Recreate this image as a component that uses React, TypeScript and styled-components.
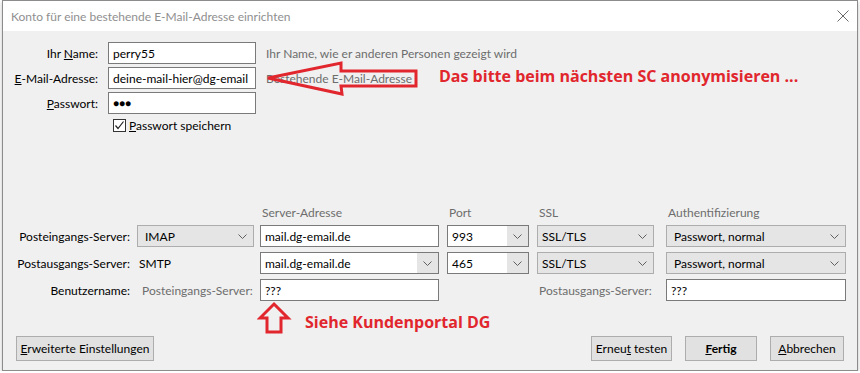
import styled, { createGlobalStyle } from "styled-components";

const GlobalStyle = createGlobalStyle`
    body {
        margin: 0;
        background: #ffffff;
        font-family: "Segoe UI", Lato, "Open Sans", sans-serif;
        font-size: 12px;
        color: #000000;
    }
`;

const UI_FONT = `"Segoe UI", Lato, "Open Sans", sans-serif`;
const RED = "#e1262d";

function Chevron() {
    return (
        <svg width="9" height="5" viewBox="0 0 9 5">
            <path d="M0.5 0.5 L4.5 4.5 L8.5 0.5" fill="none" stroke="#606060" strokeWidth="1" />
        </svg>
    );
}

export default function App() {
    return (
        <>
            <GlobalStyle />
            <Dialog>
                <TitleBar>
                    <Title>Konto für eine bestehende E-Mail-Adresse einrichten</Title>
                    <svg width="12" height="12" viewBox="0 0 12 12">
                        <path d="M0.5 0.5 L11.5 11.5 M11.5 0.5 L0.5 11.5" stroke="#6a6a6a" strokeWidth="1" />
                    </svg>
                </TitleBar>
                <Content>
                    <TopForm>
                        <Label>Ihr <u>N</u>ame:</Label>
                        <TextInput $width={148}>perry55</TextInput>
                        <Hint>Ihr Name, wie er anderen Personen gezeigt wird</Hint>

                        <Label><u>E</u>-Mail-Adresse:</Label>
                        <TextInput $width={148}>deine-mail-hier@dg-email</TextInput>
                        <Hint>Bestehende E-Mail-Adresse</Hint>

                        <Label><u>P</u>asswort:</Label>
                        <TextInput $width={148}>
                            <Dots>●●●</Dots>
                        </TextInput>
                        <span />

                        <span />
                        <CheckRow>
                            <CheckBox>
                                <svg width="11" height="11" viewBox="0 0 11 11">
                                    <path d="M1.5 5.5 L4 8.5 L9.5 1.5" fill="none" stroke="#222" strokeWidth="1.2" />
                                </svg>
                            </CheckBox>
                            <span><u>P</u>asswort speichern</span>
                        </CheckRow>
                        <span />
                    </TopForm>

                    <ServerGrid>
                        <span />
                        <span />
                        <ColHead>Server-Adresse</ColHead>
                        <ColHead>Port</ColHead>
                        <ColHead>SSL</ColHead>
                        <ColHead>Authentifizierung</ColHead>

                        <RowLabel>Posteingangs-Server:</RowLabel>
                        <Select $width={117} $pad={7}>
                            <span>IMAP</span>
                            <Chevron />
                        </Select>
                        <TextInput $width={179}>mail.dg-email.de</TextInput>
                        <Combo $width={82}>
                            <ComboText>993</ComboText>
                            <ComboButton><Chevron /></ComboButton>
                        </Combo>
                        <Select $width={117} $pad={4}>
                            <span>SSL/TLS</span>
                            <Chevron />
                        </Select>
                        <Select $width={180} $pad={7}>
                            <span>Passwort, normal</span>
                            <Chevron />
                        </Select>

                        <RowLabel>Postausgangs-Server:</RowLabel>
                        <PlainValue>SMTP</PlainValue>
                        <Combo $width={179}>
                            <ComboText>mail.dg-email.de</ComboText>
                            <ComboButton><Chevron /></ComboButton>
                        </Combo>
                        <Combo $width={82}>
                            <ComboText>465</ComboText>
                            <ComboButton><Chevron /></ComboButton>
                        </Combo>
                        <Select $width={117} $pad={4}>
                            <span>SSL/TLS</span>
                            <Chevron />
                        </Select>
                        <Select $width={180} $pad={7}>
                            <span>Passwort, normal</span>
                            <Chevron />
                        </Select>

                        <RowLabel>Benutzername:</RowLabel>
                        <SubLabel>Posteingangs-Server:</SubLabel>
                        <TextInput $width={179}>???</TextInput>
                        <span />
                        <SubLabel $flush>Postausgangs-Server:</SubLabel>
                        <TextInput $width={180}>???</TextInput>
                    </ServerGrid>

                    <ButtonRow>
                        <Button $width={138}><u>E</u>rweiterte Einstellungen</Button>
                        <RightButtons>
                            <Button $width={81}>Erneu<u>t</u> testen</Button>
                            <Button $width={72} $bold><u>F</u>ertig</Button>
                            <Button $width={74}><u>A</u>bbrechen</Button>
                        </RightButtons>
                    </ButtonRow>
                </Content>

                <ArrowLeft width="156" height="38" viewBox="0 0 156 38">
                    <polygon
                        points="4,18 77,3 77,11 152,11 152,26 77,26 78,34"
                        fill="none"
                        stroke={RED}
                        strokeWidth="3"
                        strokeLinejoin="miter"
                    />
                </ArrowLeft>
                <Note $left={436} $top={64}>Das bitte beim nächsten SC anonymisieren ...</Note>

                <ArrowUp width="35" height="35" viewBox="0 0 35 35">
                    <polygon
                        points="17,3 31,17 24,17 24,31 10,31 10,17 3,17"
                        fill="none"
                        stroke={RED}
                        strokeWidth="3"
                    />
                </ArrowUp>
                <Note $left={302} $top={310}>Siehe Kundenportal DG</Note>
            </Dialog>
        </>
    );
}

const Dialog = styled.div`
    position: relative;
    box-sizing: border-box;
    width: 856px;
    height: 371px;
    margin-left: 2px;
    border: 1px solid #8c8c8c;
    display: flex;
    flex-direction: column;
    box-shadow: 0 2px 4px rgba(0, 0, 0, 0.25);
    overflow: hidden;
`;

const TitleBar = styled.div`
    height: 30px;
    flex-shrink: 0;
    background: #ffffff;
    display: flex;
    align-items: center;
    justify-content: space-between;
    padding: 0 8px 0 8px;
`;

const Title = styled.span`
    color: #8f8f8f;
    font-size: 12px;
`;

const Content = styled.div`
    flex: 1;
    background: #f0f0f0;
    display: flex;
    flex-direction: column;
    padding-top: 11px;
`;

const TopForm = styled.div`
    display: grid;
    grid-template-columns: 95px 148px auto;
    grid-auto-rows: 22px;
    column-gap: 10px;
    row-gap: 3px;
    align-items: center;
`;

const Label = styled.label`
    text-align: right;
    white-space: nowrap;
`;

const Hint = styled.span`
    color: #6d6d6d;
    white-space: nowrap;
`;

const TextInput = styled.div<{ $width: number }>`
    box-sizing: border-box;
    width: ${props => props.$width}px;
    height: 22px;
    background: #ffffff;
    border: 1px solid #7a7a7a;
    padding: 0 4px;
    display: flex;
    align-items: center;
    white-space: nowrap;
    overflow: hidden;
`;

const Dots = styled.span`
    font-size: 10px;
    letter-spacing: 0px;
`;

const CheckRow = styled.div`
    display: flex;
    align-items: center;
    gap: 3px;
    padding-left: 5px;
    margin-top: -5px;
`;

const CheckBox = styled.span`
    box-sizing: border-box;
    width: 13px;
    height: 13px;
    border: 1px solid #333333;
    background: #ffffff;
    display: flex;
    align-items: center;
    justify-content: center;
`;

const ServerGrid = styled.div`
    margin-top: 65px;
    display: grid;
    grid-template-columns: 134px 123px 187px 90px 129px 180px;
    grid-template-rows: 16px 22px 22px 22px;
    row-gap: 5px;
    align-items: center;
`;

const ColHead = styled.span`
    color: #6d6d6d;
    padding-left: 2px;
`;

const RowLabel = styled.span`
    text-align: right;
    padding-right: 7px;
    white-space: nowrap;
`;

const SubLabel = styled.span<{ $flush?: boolean }>`
    color: #6d6d6d;
    white-space: nowrap;
    padding-left: ${props => (props.$flush ? 2 : 5)}px;
`;

const PlainValue = styled.span`
    padding-left: 2px;
`;

const Select = styled.div<{ $width: number; $pad: number }>`
    box-sizing: border-box;
    width: ${props => props.$width}px;
    height: 22px;
    background: #e5e5e5;
    border: 1px solid #adadad;
    padding: 0 6px 0 ${props => props.$pad}px;
    display: flex;
    align-items: center;
    justify-content: space-between;
`;

const Combo = styled.div<{ $width: number }>`
    box-sizing: border-box;
    width: ${props => props.$width}px;
    height: 22px;
    border: 1px solid #7a7a7a;
    background: #ffffff;
    display: flex;
`;

const ComboText = styled.span`
    flex: 1;
    display: flex;
    align-items: center;
    padding-left: 4px;
`;

const ComboButton = styled.span`
    width: 21px;
    background: #e5e5e5;
    display: flex;
    align-items: center;
    justify-content: center;
`;

const ButtonRow = styled.div`
    margin-top: 35px;
    padding: 0 13px;
    display: flex;
    justify-content: space-between;
`;

const RightButtons = styled.div`
    display: flex;
    gap: 13px;
`;

const Button = styled.button<{ $width: number; $bold?: boolean }>`
    box-sizing: border-box;
    width: ${props => props.$width}px;
    height: 25px;
    padding: 0;
    background: #e1e1e1;
    border: 1px solid #adadad;
    font-family: ${UI_FONT};
    font-size: 12px;
    font-weight: ${props => (props.$bold ? 700 : 400)};
    color: #000000;
`;

const ArrowLeft = styled.svg`
    position: absolute;
    left: 261px;
    top: 59px;
    pointer-events: none;
`;

const ArrowUp = styled.svg`
    position: absolute;
    left: 254px;
    top: 300px;
    pointer-events: none;
`;

const Note = styled.span<{ $left: number; $top: number }>`
    position: absolute;
    left: ${props => props.$left}px;
    top: ${props => props.$top}px;
    font-family: "Open Sans", sans-serif;
    font-weight: 700;
    font-size: 16px;
    line-height: 22px;
    color: ${RED};
    white-space: nowrap;
`;
